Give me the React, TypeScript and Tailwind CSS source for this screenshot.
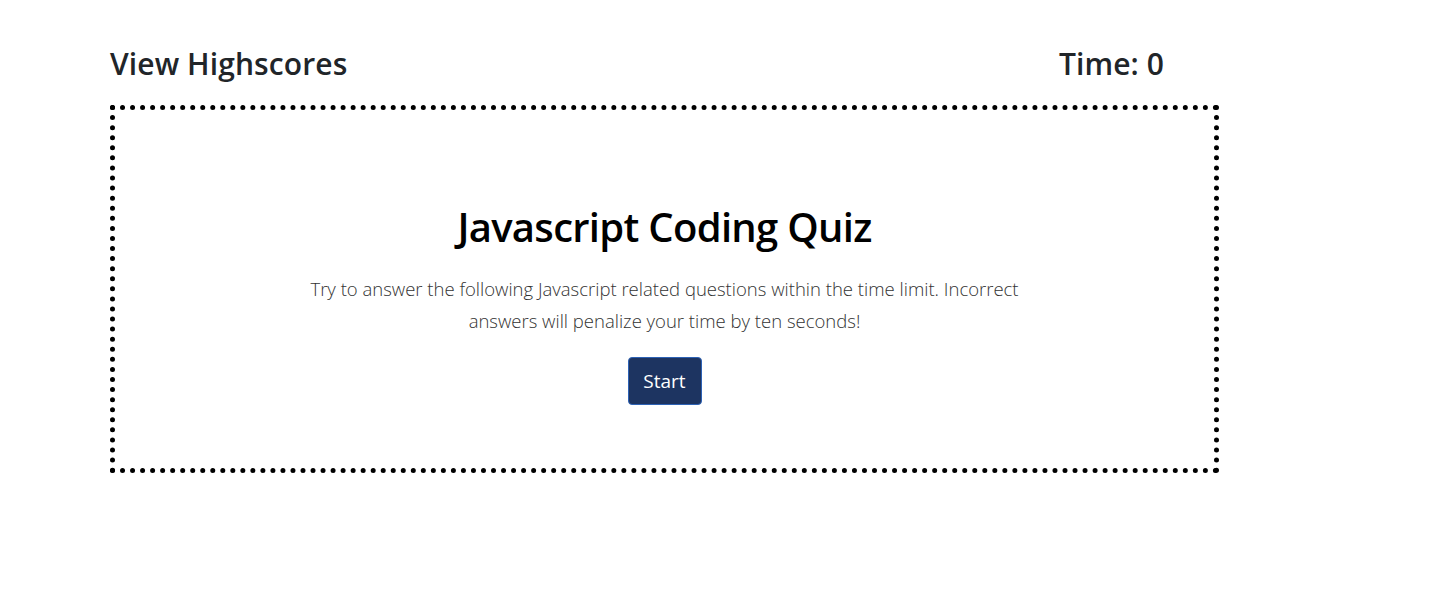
export default function App() {
  return (
    <div className="min-h-[609px] bg-white pl-[110px] pt-[46px] font-['Open_Sans',sans-serif]">
      <header className="flex w-[1109px] items-center justify-between pr-[55px] text-[#212529]">
        <a className="text-[30px] font-semibold leading-[36px] tracking-[0.1px]">View Highscores</a>
        <span className="text-[30px] font-semibold leading-[36px] tracking-[0.1px]">Time: 0</span>
      </header>
      <main className="mt-[23px] flex h-[368px] w-[1109px] flex-col items-center border-[5px] border-dotted border-black pt-[93px]">
        <h1 className="text-[40px] font-semibold leading-[48px] tracking-[-0.7px] text-black">Javascript Coding Quiz</h1>
        <p className="mt-[22px] w-[720px] text-center text-[18.5px] font-light leading-[32px] text-[#333]">
          Try to answer the following Javascript related questions within the time limit. Incorrect answers will penalize your time by ten seconds!
        </p>
        <button className="mt-[20px] h-[48px] w-[74px] rounded-[4px] border border-[#2d62b5] bg-[#1d3461] text-[19px] text-white">
          Start
        </button>
      </main>
    </div>
  );
}
